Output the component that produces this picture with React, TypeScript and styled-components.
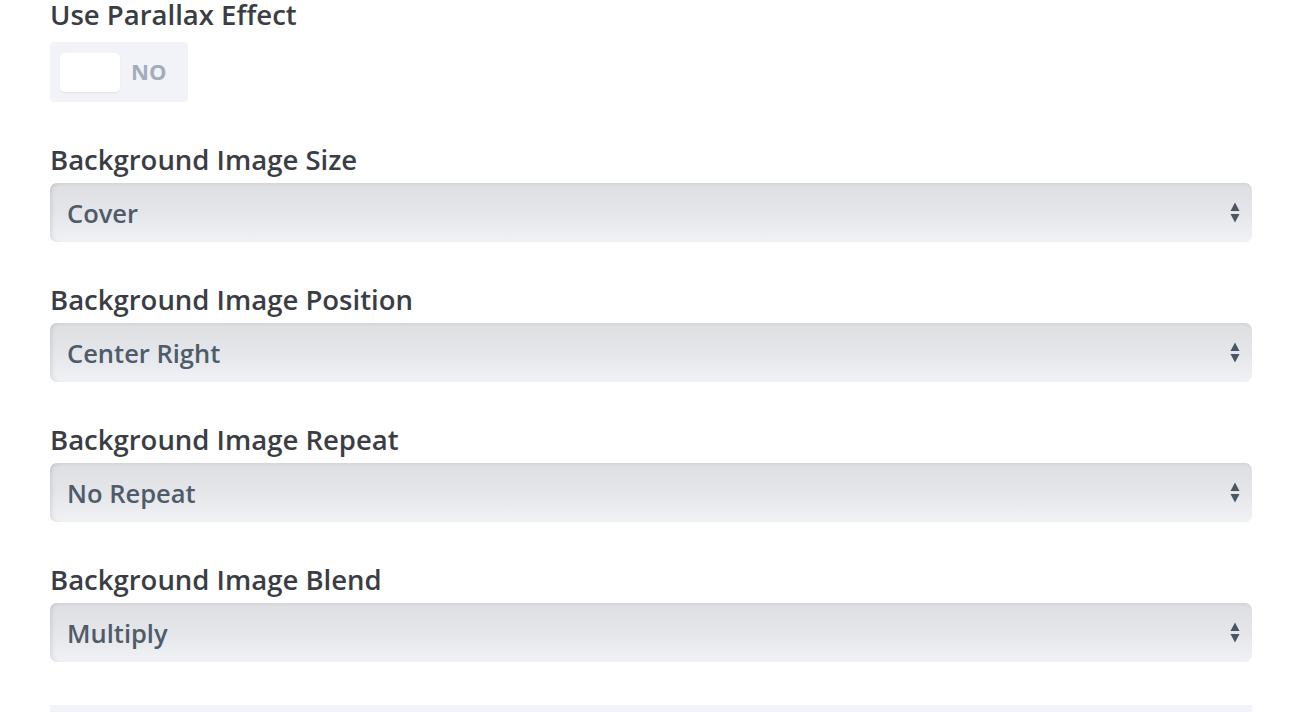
import styled, { createGlobalStyle } from "styled-components";

const GlobalStyle = createGlobalStyle`
  body {
    margin: 0;
    background: #ffffff;
    font-family: "Open Sans", "Liberation Sans", sans-serif;
  }
`;

const Panel = styled.div`
  width: 1202px;
  padding: 0 0 0 50px;
  display: flex;
  flex-direction: column;
`;

const Field = styled.div<{ $gap?: number }>`
  display: flex;
  flex-direction: column;
  align-items: flex-start;
  margin-bottom: ${(p) => p.$gap ?? 43}px;
`;

const Label = styled.label<{ $space?: number }>`
  font-size: 27.5px;
  line-height: 30px;
  font-weight: 600;
  color: #3a3e44;
  margin-bottom: ${(p) => p.$space ?? 8}px;
`;

const Toggle = styled.div`
  width: 138px;
  height: 60px;
  box-sizing: border-box;
  padding: 11px 10px;
  background: #f1f3f8;
  border-radius: 4px;
  display: flex;
  align-items: center;
  gap: 11px;
`;

const Knob = styled.div`
  width: 60px;
  height: 39px;
  background: #ffffff;
  border-radius: 5px;
  box-shadow: 0 1px 2px rgba(0, 0, 0, 0.06);
`;

const ToggleText = styled.span`
  font-size: 22px;
  line-height: 22px;
  font-weight: 700;
  color: #a3adba;
  margin-top: -2px;
`;

const Select = styled.div`
  width: 100%;
  height: 59px;
  box-sizing: border-box;
  padding: 0 12px 0 17px;
  border-radius: 7px;
  background: linear-gradient(180deg, #dddfe3 0%, #e4e6ea 50%, #f1f2f5 100%);
  box-shadow: inset 4px 0 4px -2px rgba(0, 0, 0, 0.09),
    inset 0 3px 4px -2px rgba(0, 0, 0, 0.06);
  display: flex;
  align-items: center;
  justify-content: space-between;
`;

const Value = styled.span`
  font-size: 25.5px;
  font-weight: 600;
  color: #505b69;
`;

const Arrows = () => (
  <svg width="10" height="21" viewBox="0 0 10 21">
    <path d="M5 0.5 L9.5 9 H0.5 Z" fill="#4b5664" />
    <path d="M5 20.5 L9.5 12 H0.5 Z" fill="#4b5664" />
  </svg>
);

const Divider = styled.div`
  height: 8px;
  background: #f2f3f9;
`;

const fields = [
  { label: "Background Image Size", value: "Cover" },
  { label: "Background Image Position", value: "Center Right" },
  { label: "Background Image Repeat", value: "No Repeat" },
  { label: "Background Image Blend", value: "Multiply" },
];

function App() {
  return (
    <>
      <GlobalStyle />
      <Panel>
        <Field>
          <Label $space={12}>Use Parallax Effect</Label>
          <Toggle>
            <Knob />
            <ToggleText>NO</ToggleText>
          </Toggle>
        </Field>
        {fields.map((f) => (
          <Field key={f.label}>
            <Label>{f.label}</Label>
            <Select>
              <Value>{f.value}</Value>
              <Arrows />
            </Select>
          </Field>
        ))}
        <Divider />
      </Panel>
    </>
  );
}

export default App;
